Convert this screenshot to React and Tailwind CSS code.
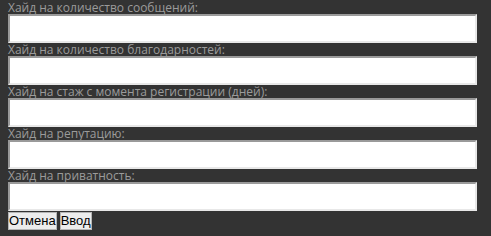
const fields = [
  'Хайд на количество сообщений:',
  'Хайд на количество благодарностей:',
  'Хайд на стаж с момента регистрации (дней):',
  'Хайд на репутацию:',
  'Хайд на приватность:',
];

export default function App() {
  return (
    <div className="w-[491px] h-[236px] bg-[#333333] pl-[8px] pr-[14px] pt-[1px] overflow-hidden">
      {fields.map((label, i) => (
        <div key={i} className="flex flex-col">
          <div className="h-[13px] leading-[13px] text-[12px] text-[#9b9b9b] font-['Open_Sans',sans-serif] whitespace-nowrap">
            {label}
          </div>
          <input
            type="text"
            className="h-[29px] w-full bg-white border-2 border-t-[#9a9a9a] border-l-[#9a9a9a] border-b-[#e8e8e8] border-r-[#e8e8e8] outline-none"
          />
        </div>
      ))}
      <div className="flex gap-[3px] mt-[1px]">
        <button className="h-[18px] px-0 bg-[#ececec] border border-[#b5b5b5] text-black text-[13px] leading-[14px] font-['Liberation_Sans',Arial,sans-serif]">
          Отмена
        </button>
        <button className="h-[18px] px-0 bg-[#ececec] border border-[#b5b5b5] text-black text-[13px] leading-[14px] font-['Liberation_Sans',Arial,sans-serif]">
          Ввод
        </button>
      </div>
    </div>
  );
}
